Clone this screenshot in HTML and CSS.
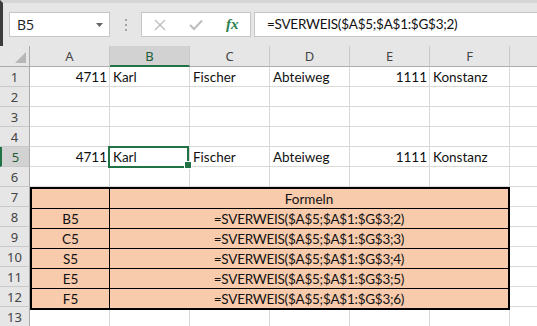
FILE: index.html
```html
<!DOCTYPE html>
<html lang="de">
<head>
  <meta charset="UTF-8" />
  <title>SVERWEIS</title>
  <link rel="stylesheet" href="styles.css">
</head>
<body>
  <div class="formula-bar">
    <div class="name-box">
      <span>B5</span>
      <svg class="caret" width="7" height="4" viewBox="0 0 7 4"><polygon points="0,0 7,0 3.5,4" fill="#666"/></svg>
    </div>
    <div class="grip"><i></i><i></i><i></i></div>
    <div class="fx-buttons">
      <svg width="12" height="12" viewBox="0 0 12 12"><path d="M1 1 L11 11 M11 1 L1 11" stroke="#bdbdbd" stroke-width="1.4" fill="none"/></svg>
      <svg width="14" height="12" viewBox="0 0 14 12"><path d="M1 6 L5 10 L13 1.5" stroke="#bdbdbd" stroke-width="2" fill="none"/></svg>
      <span class="fx">fx</span>
    </div>
    <div class="formula-input formula">=SVERWEIS($A$5;$A$1:$G$3;2)</div>
  </div>

  <div class="sheet">
    <div class="corner">
      <svg width="30" height="20" viewBox="0 0 30 20"><polygon points="15,17 26,6 26,17" fill="#b7b7b7"/></svg>
    </div>
    <div class="col-head">A</div>
    <div class="col-head selected">B</div>
    <div class="col-head">C</div>
    <div class="col-head">D</div>
    <div class="col-head">E</div>
    <div class="col-head">F</div>
    <div class="col-head last"></div>

    <div class="row-head">1</div>
    <div class="cell num">4711</div>
    <div class="cell">Karl</div>
    <div class="cell">Fischer</div>
    <div class="cell">Abteiweg</div>
    <div class="cell num">1111</div>
    <div class="cell">Konstanz</div>
    <div class="cell last"></div>

    <div class="row-head">2</div>
    <div class="cell"></div><div class="cell"></div><div class="cell"></div>
    <div class="cell"></div><div class="cell"></div><div class="cell"></div>
    <div class="cell last"></div>

    <div class="row-head">3</div>
    <div class="cell"></div><div class="cell"></div><div class="cell"></div>
    <div class="cell"></div><div class="cell"></div><div class="cell"></div>
    <div class="cell last"></div>

    <div class="row-head">4</div>
    <div class="cell"></div><div class="cell"></div><div class="cell"></div>
    <div class="cell"></div><div class="cell"></div><div class="cell"></div>
    <div class="cell last"></div>

    <div class="row-head selected">5</div>
    <div class="cell num">4711</div>
    <div class="cell active">Karl</div>
    <div class="cell">Fischer</div>
    <div class="cell">Abteiweg</div>
    <div class="cell num">1111</div>
    <div class="cell">Konstanz</div>
    <div class="cell last"></div>

    <div class="row-head">6</div>
    <div class="cell"></div><div class="cell"></div><div class="cell"></div>
    <div class="cell"></div><div class="cell"></div><div class="cell"></div>
    <div class="cell last"></div>

    <div class="formulas">
      <div class="f-label"></div>
      <div class="f-value">Formeln</div>
      <div class="f-label">B5</div>
      <div class="f-value formula">=SVERWEIS($A$5;$A$1:$G$3;2)</div>
      <div class="f-label">C5</div>
      <div class="f-value formula">=SVERWEIS($A$5;$A$1:$G$3;3)</div>
      <div class="f-label">S5</div>
      <div class="f-value formula">=SVERWEIS($A$5;$A$1:$G$3;4)</div>
      <div class="f-label">E5</div>
      <div class="f-value formula">=SVERWEIS($A$5;$A$1:$G$3;5)</div>
      <div class="f-label end">F5</div>
      <div class="f-value formula end">=SVERWEIS($A$5;$A$1:$G$3;6)</div>
    </div>

    <div class="row-head">7</div>
    <div class="cell last"></div>
    <div class="row-head">8</div>
    <div class="cell last"></div>
    <div class="row-head">9</div>
    <div class="cell last"></div>
    <div class="row-head">10</div>
    <div class="cell last"></div>
    <div class="row-head">11</div>
    <div class="cell last"></div>
    <div class="row-head">12</div>
    <div class="cell last"></div>

    <div class="row-head">13</div>
    <div class="cell"></div><div class="cell"></div><div class="cell"></div>
    <div class="cell"></div><div class="cell"></div><div class="cell"></div>
    <div class="cell last"></div>
  </div>
</body>
</html>
```

FILE: styles.css
```css
* {
  box-sizing: border-box;
}

body {
  margin: 0;
  width: 537px;
  height: 326px;
  overflow: hidden;
  background: white;
  font-family: 'Lato', sans-serif;
}

/* formula bar */

.formula-bar {
  display: flex;
  align-items: flex-start;
  height: 46px;
  padding: 9px 0 0 6px;
  background: #e6e6e6;
  border-top: 3px solid #d5d5d5;
  border-left: 3px solid #3c3c3c;
}

.name-box {
  width: 101px;
  height: 25px;
  background: white;
  border: 1px solid #c6c6c6;
  display: flex;
  align-items: center;
  justify-content: space-between;
  padding: 0 6px 0 7px;
  font-family: 'Open Sans', sans-serif;
  font-size: 14px;
  color: #222;
}

.grip {
  width: 31px;
  height: 25px;
  display: flex;
  flex-direction: column;
  align-items: center;
  justify-content: center;
  gap: 3px;
}

.grip i {
  width: 2px;
  height: 2px;
  background: #a3a3a3;
}

.fx-buttons {
  width: 110px;
  height: 25px;
  background: white;
  border: 1px solid #c6c6c6;
  display: flex;
  align-items: center;
  justify-content: space-around;
}

.fx {
  font-family: 'Liberation Serif', serif;
  font-style: italic;
  font-weight: bold;
  font-size: 15px;
  color: #2b8050;
}

.formula-input {
  flex: 1;
  height: 25px;
  margin-left: 3px;
  background: white;
  border: 1px solid #c6c6c6;
  border-right: none;
  padding-left: 12px;
  line-height: 23px;
  font-size: 13.5px;
  color: #111;
}

.formula {
  letter-spacing: -0.25px;
}

/* sheet grid */

.sheet {
  display: grid;
  grid-template-columns: 30px repeat(6, 80px) 1fr;
  grid-template-rows: 21px repeat(13, 20px);
  font-size: 13.5px;
}

.corner {
  background: #e6e6e6;
  border-right: 1px solid #ababab;
  border-bottom: 1px solid #ababab;
}

.corner svg {
  display: block;
}

.col-head {
  background: #e6e6e6;
  border-right: 1px solid #c8c8c8;
  border-bottom: 1px solid #ababab;
  display: flex;
  align-items: center;
  justify-content: center;
  font-family: 'Noto Sans', sans-serif;
  font-size: 13px;
  color: #444;
}

.col-head.selected {
  background: #d2d2d2;
  border-bottom: 2px solid #217346;
  color: #1d5c38;
}

.col-head.last {
  border-right: none;
}

.row-head {
  background: #e6e6e6;
  border-right: 1px solid #ababab;
  border-bottom: 1px solid #c8c8c8;
  display: flex;
  align-items: center;
  justify-content: center;
  font-family: 'Noto Sans', sans-serif;
  font-size: 13px;
  color: #444;
}

.row-head.selected {
  background: #d2d2d2;
  border-left: 2px solid #217346;
  color: #1d5c38;
}

.cell {
  border-right: 1px solid #d9d9d9;
  border-bottom: 1px solid #d9d9d9;
  display: flex;
  align-items: center;
  padding: 1px 3px 0;
  white-space: nowrap;
  color: #111;
}

.cell.num {
  justify-content: flex-end;
  padding-right: 2px;
}

.cell.last {
  border-right: none;
}

.cell.active {
  position: relative;
}

.cell.active::after {
  content: "";
  position: absolute;
  top: -1px;
  left: -2px;
  right: 0;
  bottom: -2px;
  border: 2px solid #217346;
}

.cell.active::before {
  content: "";
  position: absolute;
  right: -3px;
  bottom: -3px;
  width: 6px;
  height: 6px;
  background: #217346;
  border: 1px solid white;
  z-index: 2;
}

/* formula table */

.formulas {
  grid-column: 2 / 8;
  grid-row: 8 / 14;
  margin-bottom: -3px;
  z-index: 1;
  border: 2px solid #000;
  background: #f8cbad;
  display: grid;
  grid-template-columns: 78px 1fr;
  grid-template-rows: repeat(5, 20px) 19px;
}

.f-label,
.f-value {
  border-bottom: 1px solid #000;
  display: flex;
  align-items: center;
  justify-content: center;
  padding-top: 1px;
  white-space: nowrap;
  color: #111;
}

.f-label {
  border-right: 1px solid #000;
}

.f-label.end,
.f-value.end {
  border-bottom: none;
}
```
